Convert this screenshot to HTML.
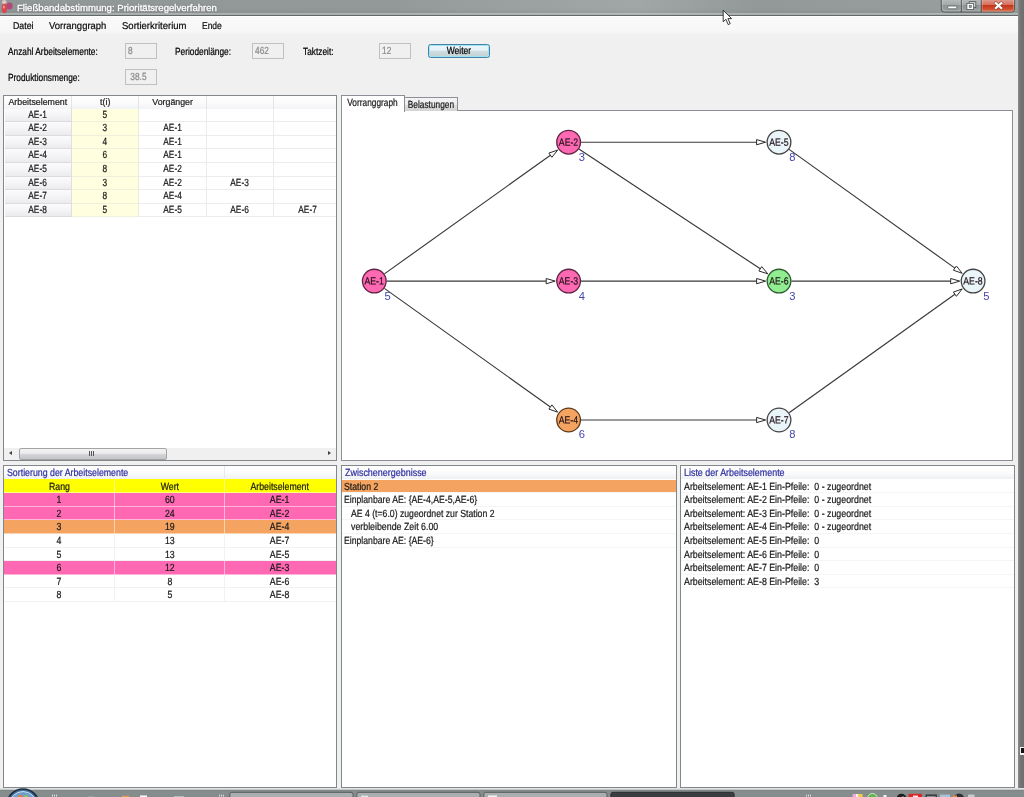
<!DOCTYPE html>
<html lang="de"><head><meta charset="utf-8"><title>Fließbandabstimmung: Prioritätsregelverfahren</title>
<style>
*{box-sizing:border-box;margin:0;padding:0}
html,body{width:1024px;height:797px;overflow:hidden;background:#f0f0f0}
body{position:relative;font-family:"Liberation Sans",sans-serif;font-size:8.8px;color:#1a1a1a}
.abs{position:absolute}
#titlebar{left:0;top:0;width:1024px;height:16px;background:linear-gradient(180deg,rgba(0,0,0,0) 0,rgba(0,0,0,0) 8px,rgba(0,0,0,.05) 13.3px,rgba(255,255,255,.42) 13.6px,rgba(255,255,255,.42) 14.4px,#636868 14.8px,#636868 15.7px,#fff 16px),linear-gradient(90deg,#919797 0%,#939999 38%,#989d9d 45%,#a1a6a6 62%,#939999 74%,#999e9e 100%)}
#title{left:17px;top:1.5px;color:#fff;font-size:9.6px;white-space:nowrap;text-shadow:0 0 2px rgba(60,60,60,.6);-webkit-text-stroke:0.3px #fff}
#menubar{left:0;top:16px;width:1018px;height:19px;background:linear-gradient(#fff 0,#fff .6px,#f9f9f9 1.2px,#f7f7f7 15px,#f0f0f0 19px)}
.menu{top:19.6px;font-size:9.9px;color:#0a0a0a;white-space:nowrap;transform-origin:0 50%;-webkit-text-stroke:0.2px #0a0a0a}
#rightedge{left:1017.6px;top:0;width:6.4px;height:790px;background:linear-gradient(90deg,#8c8c8c,#747474 40%,#6e6e6e)}
.t{display:inline-block;-webkit-text-stroke:0.22px currentColor;font-size:10.4px;transform:scaleX(0.8011) rotate(.03deg);transform-origin:0 50%;white-space:nowrap}
.c .t,.t.c{transform-origin:50% 50%}
.lbl{white-space:nowrap;color:#000}
.inp{background:#f0f0f0;border:1px solid #c0c0c0;color:#8a8a8a;height:16px;padding:1.3px 0 0 1.6px;line-height:11px}
.panel{background:#fff;border:1px solid #82878c;overflow:hidden}
.row{left:0;width:100%;height:13.6px}
.cell{position:absolute;top:0;height:13.6px;line-height:13.2px;text-align:center;white-space:nowrap;display:flex;justify-content:center}
.fc{display:flex;justify-content:center}
.lrow{position:absolute;left:0;width:100%;height:13.6px;line-height:13.2px;border-bottom:1px solid #f5f5f5;white-space:nowrap}
.hd{position:absolute;left:0;top:0;width:100%;height:12.9px;line-height:13.2px;color:#2e2ea0;-webkit-text-stroke:0.2px #2e2ea0;background:linear-gradient(#ffffff,#fcfcfd 50%,#eef0f3);white-space:nowrap}
#wrap{position:absolute;left:0;top:0;width:1024px;height:797px;will-change:transform}
</style></head><body><div id="wrap">
<div id="titlebar" class="abs"></div>
<div id="title" class="abs">Fließbandabstimmung: Prioritätsregelverfahren</div>
<div id="menubar" class="abs"></div>
<div class="abs menu" style="left:12.5px;transform:scaleX(.89) rotate(.03deg)">Datei</div>
<div class="abs menu" style="left:48.5px;transform:scaleX(.958) rotate(.03deg)">Vorranggraph</div>
<div class="abs menu" style="left:121.5px;transform:scaleX(.963) rotate(.03deg)">Sortierkriterium</div>
<div class="abs menu" style="left:202.2px;transform:scaleX(.857) rotate(.03deg)">Ende</div>
<div id="rightedge" class="abs"></div>

<div class="abs lbl" style="left:8px;top:45.5px"><span class="t">Anzahl Arbeitselemente:</span></div>
<div class="abs inp" style="left:125px;top:43px;width:32px"><span class="t">8</span></div>
<div class="abs lbl" style="left:175px;top:45.5px"><span class="t">Periodenlänge:</span></div>
<div class="abs inp" style="left:252px;top:43px;width:32px"><span class="t">462</span></div>
<div class="abs lbl" style="left:302.5px;top:45.5px"><span class="t">Taktzeit:</span></div>
<div class="abs inp" style="left:379px;top:43px;width:32px"><span class="t">12</span></div>
<div class="abs c fc" id="weiter" style="left:427.5px;top:43.5px;width:62px;height:14.8px;border:1.2px solid #4584a8;border-radius:2.5px;background:linear-gradient(#eef8fd 0%,#e2f0f6 45%,#cfdcdf 52%,#c4d2d4 100%);box-shadow:inset 0 0 0 1px #9fe2f2;text-align:center;line-height:11.6px;color:#000;-webkit-text-stroke:0.15px #000"><span class="t" style="transform:scaleX(0.8181) rotate(.03deg)">Weiter</span></div>
<div class="abs lbl" style="left:8px;top:71.5px"><span class="t">Produktionsmenge:</span></div>
<div class="abs inp" style="left:125px;top:69px;width:32px"><span class="t">&nbsp;38.5</span></div>
<div class="abs panel" id="lt" style="left:3px;top:95px;width:334px;height:366px">
<div class="abs row" style="top:0;height:12.6px;background:linear-gradient(#ffffff,#fbfbfc 50%,#f2f3f5)">
<div class="cell" style="left:0.6px;width:67.4px;height:12.6px;line-height:12px;border-right:1px solid #e3e4e6;-webkit-text-stroke:0.2px #1a1a1a">Arbeitselement</div>
<div class="cell" style="left:68.0px;width:67.4px;height:12.6px;line-height:12px;border-right:1px solid #e3e4e6;-webkit-text-stroke:0.2px #1a1a1a">t(i)</div>
<div class="cell" style="left:135.4px;width:67.4px;height:12.6px;line-height:12px;border-right:1px solid #e3e4e6;-webkit-text-stroke:0.2px #1a1a1a">Vorgänger</div>
<div class="cell" style="left:202.8px;width:67.4px;height:12.6px;line-height:12px;border-right:1px solid #e3e4e6;-webkit-text-stroke:0.2px #1a1a1a"></div>
<div class="cell" style="left:270.2px;width:67.4px;height:12.6px;line-height:12px;border-right:1px solid #e3e4e6;-webkit-text-stroke:0.2px #1a1a1a"></div>
</div>
<div class="abs row c" style="top:12.6px">
<div class="cell" style="left:0.6px;width:67.4px;line-height:12.6px;background:linear-gradient(#fbfbfc,#f4f4f6 55%,#ebebee);border-right:1px solid #e0e0e2;border-bottom:1px solid #dcdcde"><span class="t">AE-1</span></div>
<div class="cell" style="left:68.0px;width:67.4px;line-height:12.6px;background:#ffffe0;border-right:1px solid #eeeed6;border-bottom:1px solid #f0f0dc"><span class="t">5</span></div>
<div class="cell" style="left:135.4px;width:67.4px;line-height:12.6px;border-right:1px solid #ececec;border-bottom:1px solid #ececec"></div>
<div class="cell" style="left:202.8px;width:67.4px;line-height:12.6px;border-right:1px solid #ececec;border-bottom:1px solid #ececec"></div>
<div class="cell" style="left:270.2px;width:67.4px;line-height:12.6px;border-right:1px solid #ececec;border-bottom:1px solid #ececec"></div>
</div>
<div class="abs row c" style="top:26.2px">
<div class="cell" style="left:0.6px;width:67.4px;line-height:12.6px;background:linear-gradient(#fbfbfc,#f4f4f6 55%,#ebebee);border-right:1px solid #e0e0e2;border-bottom:1px solid #dcdcde"><span class="t">AE-2</span></div>
<div class="cell" style="left:68.0px;width:67.4px;line-height:12.6px;background:#ffffe0;border-right:1px solid #eeeed6;border-bottom:1px solid #f0f0dc"><span class="t">3</span></div>
<div class="cell" style="left:135.4px;width:67.4px;line-height:12.6px;border-right:1px solid #ececec;border-bottom:1px solid #ececec"><span class="t">AE-1</span></div>
<div class="cell" style="left:202.8px;width:67.4px;line-height:12.6px;border-right:1px solid #ececec;border-bottom:1px solid #ececec"></div>
<div class="cell" style="left:270.2px;width:67.4px;line-height:12.6px;border-right:1px solid #ececec;border-bottom:1px solid #ececec"></div>
</div>
<div class="abs row c" style="top:39.8px">
<div class="cell" style="left:0.6px;width:67.4px;line-height:12.6px;background:linear-gradient(#fbfbfc,#f4f4f6 55%,#ebebee);border-right:1px solid #e0e0e2;border-bottom:1px solid #dcdcde"><span class="t">AE-3</span></div>
<div class="cell" style="left:68.0px;width:67.4px;line-height:12.6px;background:#ffffe0;border-right:1px solid #eeeed6;border-bottom:1px solid #f0f0dc"><span class="t">4</span></div>
<div class="cell" style="left:135.4px;width:67.4px;line-height:12.6px;border-right:1px solid #ececec;border-bottom:1px solid #ececec"><span class="t">AE-1</span></div>
<div class="cell" style="left:202.8px;width:67.4px;line-height:12.6px;border-right:1px solid #ececec;border-bottom:1px solid #ececec"></div>
<div class="cell" style="left:270.2px;width:67.4px;line-height:12.6px;border-right:1px solid #ececec;border-bottom:1px solid #ececec"></div>
</div>
<div class="abs row c" style="top:53.4px">
<div class="cell" style="left:0.6px;width:67.4px;line-height:12.6px;background:linear-gradient(#fbfbfc,#f4f4f6 55%,#ebebee);border-right:1px solid #e0e0e2;border-bottom:1px solid #dcdcde"><span class="t">AE-4</span></div>
<div class="cell" style="left:68.0px;width:67.4px;line-height:12.6px;background:#ffffe0;border-right:1px solid #eeeed6;border-bottom:1px solid #f0f0dc"><span class="t">6</span></div>
<div class="cell" style="left:135.4px;width:67.4px;line-height:12.6px;border-right:1px solid #ececec;border-bottom:1px solid #ececec"><span class="t">AE-1</span></div>
<div class="cell" style="left:202.8px;width:67.4px;line-height:12.6px;border-right:1px solid #ececec;border-bottom:1px solid #ececec"></div>
<div class="cell" style="left:270.2px;width:67.4px;line-height:12.6px;border-right:1px solid #ececec;border-bottom:1px solid #ececec"></div>
</div>
<div class="abs row c" style="top:67.0px">
<div class="cell" style="left:0.6px;width:67.4px;line-height:12.6px;background:linear-gradient(#fbfbfc,#f4f4f6 55%,#ebebee);border-right:1px solid #e0e0e2;border-bottom:1px solid #dcdcde"><span class="t">AE-5</span></div>
<div class="cell" style="left:68.0px;width:67.4px;line-height:12.6px;background:#ffffe0;border-right:1px solid #eeeed6;border-bottom:1px solid #f0f0dc"><span class="t">8</span></div>
<div class="cell" style="left:135.4px;width:67.4px;line-height:12.6px;border-right:1px solid #ececec;border-bottom:1px solid #ececec"><span class="t">AE-2</span></div>
<div class="cell" style="left:202.8px;width:67.4px;line-height:12.6px;border-right:1px solid #ececec;border-bottom:1px solid #ececec"></div>
<div class="cell" style="left:270.2px;width:67.4px;line-height:12.6px;border-right:1px solid #ececec;border-bottom:1px solid #ececec"></div>
</div>
<div class="abs row c" style="top:80.6px">
<div class="cell" style="left:0.6px;width:67.4px;line-height:12.6px;background:linear-gradient(#fbfbfc,#f4f4f6 55%,#ebebee);border-right:1px solid #e0e0e2;border-bottom:1px solid #dcdcde"><span class="t">AE-6</span></div>
<div class="cell" style="left:68.0px;width:67.4px;line-height:12.6px;background:#ffffe0;border-right:1px solid #eeeed6;border-bottom:1px solid #f0f0dc"><span class="t">3</span></div>
<div class="cell" style="left:135.4px;width:67.4px;line-height:12.6px;border-right:1px solid #ececec;border-bottom:1px solid #ececec"><span class="t">AE-2</span></div>
<div class="cell" style="left:202.8px;width:67.4px;line-height:12.6px;border-right:1px solid #ececec;border-bottom:1px solid #ececec"><span class="t">AE-3</span></div>
<div class="cell" style="left:270.2px;width:67.4px;line-height:12.6px;border-right:1px solid #ececec;border-bottom:1px solid #ececec"></div>
</div>
<div class="abs row c" style="top:94.2px">
<div class="cell" style="left:0.6px;width:67.4px;line-height:12.6px;background:linear-gradient(#fbfbfc,#f4f4f6 55%,#ebebee);border-right:1px solid #e0e0e2;border-bottom:1px solid #dcdcde"><span class="t">AE-7</span></div>
<div class="cell" style="left:68.0px;width:67.4px;line-height:12.6px;background:#ffffe0;border-right:1px solid #eeeed6;border-bottom:1px solid #f0f0dc"><span class="t">8</span></div>
<div class="cell" style="left:135.4px;width:67.4px;line-height:12.6px;border-right:1px solid #ececec;border-bottom:1px solid #ececec"><span class="t">AE-4</span></div>
<div class="cell" style="left:202.8px;width:67.4px;line-height:12.6px;border-right:1px solid #ececec;border-bottom:1px solid #ececec"></div>
<div class="cell" style="left:270.2px;width:67.4px;line-height:12.6px;border-right:1px solid #ececec;border-bottom:1px solid #ececec"></div>
</div>
<div class="abs row c" style="top:107.8px">
<div class="cell" style="left:0.6px;width:67.4px;line-height:12.6px;background:linear-gradient(#fbfbfc,#f4f4f6 55%,#ebebee);border-right:1px solid #e0e0e2;border-bottom:1px solid #dcdcde"><span class="t">AE-8</span></div>
<div class="cell" style="left:68.0px;width:67.4px;line-height:12.6px;background:#ffffe0;border-right:1px solid #eeeed6;border-bottom:1px solid #f0f0dc"><span class="t">5</span></div>
<div class="cell" style="left:135.4px;width:67.4px;line-height:12.6px;border-right:1px solid #ececec;border-bottom:1px solid #ececec"><span class="t">AE-5</span></div>
<div class="cell" style="left:202.8px;width:67.4px;line-height:12.6px;border-right:1px solid #ececec;border-bottom:1px solid #ececec"><span class="t">AE-6</span></div>
<div class="cell" style="left:270.2px;width:67.4px;line-height:12.6px;border-right:1px solid #ececec;border-bottom:1px solid #ececec"><span class="t">AE-7</span></div>
</div>
<div class="abs" style="left:0;top:351.5px;width:332px;height:13px;background:#f0f0f0">
<div class="abs" style="left:14.5px;top:0.5px;width:148.5px;height:12px;border:1px solid #a4a4a4;border-radius:2px;background:linear-gradient(#f4f4f4,#e9e9eb 45%,#d6d6d9 50%,#c4c5c9)"></div>
<div class="abs" style="left:5px;top:3.6px;width:0;height:0;border-top:2.6px solid transparent;border-bottom:2.6px solid transparent;border-right:3.2px solid #404040"></div>
<div class="abs" style="left:324px;top:3.4px;width:0;height:0;border-top:2.8px solid transparent;border-bottom:2.8px solid transparent;border-left:3.4px solid #404040"></div>
<div class="abs" style="left:85px;top:3.5px;width:1px;height:5px;background:#555;box-shadow:2px 0 0 #555,4px 0 0 #555"></div>
</div>
</div>
<div class="abs panel" id="bl" style="left:3px;top:465px;width:334px;height:323px">
<div class="hd" style="padding-left:2.5px"><span class="t" style="transform:scaleX(0.8464) rotate(.03deg)">Sortierung der Arbeitselemente</span>
<i class="abs" style="left:219.8px;top:0;width:1px;height:13.6px;background:#e6e8ec"></i>
</div>
<div class="lrow c" style="top:12.9px;height:14.3px;padding-top:.7px;background:#ffff00;border-bottom:1px solid rgba(255,255,255,.5)">
<div class="cell" style="left:0.5px;width:110.4px;height:14.3px;padding-top:.7px;border-right:1px solid rgba(255,255,255,.5)"><span class="t" style="transform:scaleX(0.8435) rotate(.03deg)">Rang</span></div>
<div class="cell" style="left:110.9px;width:110.4px;height:14.3px;padding-top:.7px;border-right:1px solid rgba(255,255,255,.5)"><span class="t" style="transform:scaleX(0.8435) rotate(.03deg)">Wert</span></div>
<div class="cell" style="left:221.3px;width:110.4px;height:14.3px;padding-top:.7px;border-right:1px solid transparent"><span class="t" style="transform:scaleX(0.8435) rotate(.03deg)">Arbeitselement</span></div>
</div>
<div class="lrow c" style="top:27.2px;background:#ff69b4;border-bottom:1px solid rgba(255,255,255,.5)">
<div class="cell" style="left:0.5px;width:110.4px;border-right:1px solid rgba(255,255,255,.5)"><span class="t" style="transform:scaleX(0.8435) rotate(.03deg)">1</span></div>
<div class="cell" style="left:110.9px;width:110.4px;border-right:1px solid rgba(255,255,255,.5)"><span class="t" style="transform:scaleX(0.8435) rotate(.03deg)">60</span></div>
<div class="cell" style="left:221.3px;width:110.4px;border-right:1px solid transparent"><span class="t" style="transform:scaleX(0.8435) rotate(.03deg)">AE-1</span></div>
</div>
<div class="lrow c" style="top:40.8px;background:#ff69b4;border-bottom:1px solid rgba(255,255,255,.5)">
<div class="cell" style="left:0.5px;width:110.4px;border-right:1px solid rgba(255,255,255,.5)"><span class="t" style="transform:scaleX(0.8435) rotate(.03deg)">2</span></div>
<div class="cell" style="left:110.9px;width:110.4px;border-right:1px solid rgba(255,255,255,.5)"><span class="t" style="transform:scaleX(0.8435) rotate(.03deg)">24</span></div>
<div class="cell" style="left:221.3px;width:110.4px;border-right:1px solid transparent"><span class="t" style="transform:scaleX(0.8435) rotate(.03deg)">AE-2</span></div>
</div>
<div class="lrow c" style="top:54.4px;background:#f4a460;border-bottom:1px solid rgba(255,255,255,.5)">
<div class="cell" style="left:0.5px;width:110.4px;border-right:1px solid rgba(255,255,255,.5)"><span class="t" style="transform:scaleX(0.8435) rotate(.03deg)">3</span></div>
<div class="cell" style="left:110.9px;width:110.4px;border-right:1px solid rgba(255,255,255,.5)"><span class="t" style="transform:scaleX(0.8435) rotate(.03deg)">19</span></div>
<div class="cell" style="left:221.3px;width:110.4px;border-right:1px solid transparent"><span class="t" style="transform:scaleX(0.8435) rotate(.03deg)">AE-4</span></div>
</div>
<div class="lrow c" style="top:68.0px;background:#fff;border-bottom:1px solid #f2f2f2">
<div class="cell" style="left:0.5px;width:110.4px;border-right:1px solid #f2f2f2"><span class="t" style="transform:scaleX(0.8435) rotate(.03deg)">4</span></div>
<div class="cell" style="left:110.9px;width:110.4px;border-right:1px solid #f2f2f2"><span class="t" style="transform:scaleX(0.8435) rotate(.03deg)">13</span></div>
<div class="cell" style="left:221.3px;width:110.4px;border-right:1px solid transparent"><span class="t" style="transform:scaleX(0.8435) rotate(.03deg)">AE-7</span></div>
</div>
<div class="lrow c" style="top:81.6px;background:#fff;border-bottom:1px solid #f2f2f2">
<div class="cell" style="left:0.5px;width:110.4px;border-right:1px solid #f2f2f2"><span class="t" style="transform:scaleX(0.8435) rotate(.03deg)">5</span></div>
<div class="cell" style="left:110.9px;width:110.4px;border-right:1px solid #f2f2f2"><span class="t" style="transform:scaleX(0.8435) rotate(.03deg)">13</span></div>
<div class="cell" style="left:221.3px;width:110.4px;border-right:1px solid transparent"><span class="t" style="transform:scaleX(0.8435) rotate(.03deg)">AE-5</span></div>
</div>
<div class="lrow c" style="top:95.2px;background:#ff69b4;border-bottom:1px solid rgba(255,255,255,.5)">
<div class="cell" style="left:0.5px;width:110.4px;border-right:1px solid rgba(255,255,255,.5)"><span class="t" style="transform:scaleX(0.8435) rotate(.03deg)">6</span></div>
<div class="cell" style="left:110.9px;width:110.4px;border-right:1px solid rgba(255,255,255,.5)"><span class="t" style="transform:scaleX(0.8435) rotate(.03deg)">12</span></div>
<div class="cell" style="left:221.3px;width:110.4px;border-right:1px solid transparent"><span class="t" style="transform:scaleX(0.8435) rotate(.03deg)">AE-3</span></div>
</div>
<div class="lrow c" style="top:108.8px;background:#fff;border-bottom:1px solid #f2f2f2">
<div class="cell" style="left:0.5px;width:110.4px;border-right:1px solid #f2f2f2"><span class="t" style="transform:scaleX(0.8435) rotate(.03deg)">7</span></div>
<div class="cell" style="left:110.9px;width:110.4px;border-right:1px solid #f2f2f2"><span class="t" style="transform:scaleX(0.8435) rotate(.03deg)">8</span></div>
<div class="cell" style="left:221.3px;width:110.4px;border-right:1px solid transparent"><span class="t" style="transform:scaleX(0.8435) rotate(.03deg)">AE-6</span></div>
</div>
<div class="lrow c" style="top:122.4px;background:#fff;border-bottom:1px solid #f2f2f2">
<div class="cell" style="left:0.5px;width:110.4px;border-right:1px solid #f2f2f2"><span class="t" style="transform:scaleX(0.8435) rotate(.03deg)">8</span></div>
<div class="cell" style="left:110.9px;width:110.4px;border-right:1px solid #f2f2f2"><span class="t" style="transform:scaleX(0.8435) rotate(.03deg)">5</span></div>
<div class="cell" style="left:221.3px;width:110.4px;border-right:1px solid transparent"><span class="t" style="transform:scaleX(0.8435) rotate(.03deg)">AE-8</span></div>
</div>
</div>
<div class="abs panel" id="bm" style="left:341px;top:465px;width:336px;height:323px">
<div class="hd" style="padding-left:2.5px"><span class="t" style="transform:scaleX(0.8615) rotate(.03deg)">Zwischenergebnisse</span></div>
<div class="lrow" style="top:13.6px;background:linear-gradient(#fff 0,#fff 0.4px,#f4a460 0.4px,#f4a460 12.1px,#fff 12.1px);padding-left:2px"><span class="t" style="transform:scaleX(0.8351) rotate(.03deg)">Station 2</span></div>
<div class="lrow" style="top:27.2px;background:#fff;padding-left:2px"><span class="t" style="transform:scaleX(0.8351) rotate(.03deg)">Einplanbare AE: {AE-4,AE-5,AE-6}</span></div>
<div class="lrow" style="top:40.8px;background:#fff;padding-left:9px"><span class="t" style="transform:scaleX(0.8351) rotate(.03deg)">AE 4 (t=6.0) zugeordnet zur Station 2</span></div>
<div class="lrow" style="top:54.4px;background:#fff;padding-left:9px"><span class="t" style="transform:scaleX(0.8483) rotate(.03deg)">verbleibende Zeit 6.00</span></div>
<div class="lrow" style="top:68.0px;background:#fff;padding-left:2px"><span class="t" style="transform:scaleX(0.8351) rotate(.03deg)">Einplanbare AE: {AE-6}</span></div>
</div>
<div class="abs panel" id="br" style="left:680px;top:465px;width:335px;height:323px">
<div class="hd" style="padding-left:2.5px"><span class="t" style="transform:scaleX(0.8577) rotate(.03deg)">Liste der Arbeitselemente</span></div>
<div class="lrow" style="top:13.6px;padding-left:2.5px"><span class="t" style="transform:scaleX(0.8483) rotate(.03deg)">Arbeitselement: AE-1 Ein-Pfeile:&nbsp; 0 - zugeordnet</span></div>
<div class="lrow" style="top:27.2px;padding-left:2.5px"><span class="t" style="transform:scaleX(0.8483) rotate(.03deg)">Arbeitselement: AE-2 Ein-Pfeile:&nbsp; 0 - zugeordnet</span></div>
<div class="lrow" style="top:40.8px;padding-left:2.5px"><span class="t" style="transform:scaleX(0.8483) rotate(.03deg)">Arbeitselement: AE-3 Ein-Pfeile:&nbsp; 0 - zugeordnet</span></div>
<div class="lrow" style="top:54.4px;padding-left:2.5px"><span class="t" style="transform:scaleX(0.8483) rotate(.03deg)">Arbeitselement: AE-4 Ein-Pfeile:&nbsp; 0 - zugeordnet</span></div>
<div class="lrow" style="top:68.0px;padding-left:2.5px"><span class="t" style="transform:scaleX(0.8483) rotate(.03deg)">Arbeitselement: AE-5 Ein-Pfeile:&nbsp; 0</span></div>
<div class="lrow" style="top:81.6px;padding-left:2.5px"><span class="t" style="transform:scaleX(0.8483) rotate(.03deg)">Arbeitselement: AE-6 Ein-Pfeile:&nbsp; 0</span></div>
<div class="lrow" style="top:95.2px;padding-left:2.5px"><span class="t" style="transform:scaleX(0.8483) rotate(.03deg)">Arbeitselement: AE-7 Ein-Pfeile:&nbsp; 0</span></div>
<div class="lrow" style="top:108.8px;padding-left:2.5px"><span class="t" style="transform:scaleX(0.8483) rotate(.03deg)">Arbeitselement: AE-8 Ein-Pfeile:&nbsp; 3</span></div>
</div>
<div class="abs" style="left:341px;top:110px;width:672px;height:351px;background:#fff;border:1px solid #8c9096"></div>
<div class="abs c fc" style="left:404px;top:96.5px;width:54px;height:14px;border:1px solid #8c9096;border-bottom:none;background:linear-gradient(#f4f4f4,#ececec 50%,#dedede 51%,#d4d4d4);text-align:center;line-height:13.4px;padding-left:.5px"><span class="t">Belastungen</span></div>
<div class="abs c fc" style="left:341px;top:94.5px;width:64px;height:17px;border:1px solid #8c9096;border-bottom:none;background:#fff;text-align:center;line-height:14.8px;padding-right:.4px"><span class="t">Vorranggraph</span></div>
<svg class="abs" style="left:0;top:0" width="1024" height="797" viewBox="0 0 1024 797" font-family="Liberation Sans, sans-serif">
<line x1="384.4" y1="273.9" x2="550.4" y2="155.2" stroke="#383838" stroke-width="1.15"/>
<polygon points="557.7,150.0 551.9,157.3 548.9,153.1" fill="#fff" stroke="#2a2a2a" stroke-width="1"/>
<line x1="386.7" y1="281.1" x2="546.2" y2="281.1" stroke="#383838" stroke-width="1.15"/>
<polygon points="555.2,281.1 546.2,283.8 546.2,278.5" fill="#fff" stroke="#2a2a2a" stroke-width="1"/>
<line x1="384.4" y1="288.4" x2="550.4" y2="407.0" stroke="#383838" stroke-width="1.15"/>
<polygon points="557.7,412.2 548.9,409.1 551.9,404.9" fill="#fff" stroke="#2a2a2a" stroke-width="1"/>
<line x1="581.0" y1="142.2" x2="756.6" y2="142.2" stroke="#383838" stroke-width="1.15"/>
<polygon points="765.6,142.2 756.6,144.8 756.6,139.6" fill="#fff" stroke="#2a2a2a" stroke-width="1"/>
<line x1="578.9" y1="149.0" x2="760.3" y2="268.8" stroke="#383838" stroke-width="1.15"/>
<polygon points="767.8,273.8 758.9,271.0 761.7,266.6" fill="#fff" stroke="#2a2a2a" stroke-width="1"/>
<line x1="581.0" y1="281.1" x2="756.6" y2="281.1" stroke="#383838" stroke-width="1.15"/>
<polygon points="765.6,281.1 756.6,283.8 756.6,278.5" fill="#fff" stroke="#2a2a2a" stroke-width="1"/>
<line x1="581.0" y1="420.0" x2="756.6" y2="420.0" stroke="#383838" stroke-width="1.15"/>
<polygon points="765.6,420.0 756.6,422.6 756.6,417.4" fill="#fff" stroke="#2a2a2a" stroke-width="1"/>
<line x1="789.1" y1="149.4" x2="954.9" y2="268.1" stroke="#383838" stroke-width="1.15"/>
<polygon points="962.2,273.3 953.4,270.2 956.4,266.0" fill="#fff" stroke="#2a2a2a" stroke-width="1"/>
<line x1="791.4" y1="281.1" x2="950.7" y2="281.1" stroke="#383838" stroke-width="1.15"/>
<polygon points="959.7,281.1 950.7,283.8 950.7,278.5" fill="#fff" stroke="#2a2a2a" stroke-width="1"/>
<line x1="789.1" y1="412.8" x2="954.9" y2="294.2" stroke="#383838" stroke-width="1.15"/>
<polygon points="962.2,288.9 956.4,296.3 953.4,292.1" fill="#fff" stroke="#2a2a2a" stroke-width="1"/>
<circle cx="374.3" cy="281.1" r="11.85" fill="#ff69b4" stroke="#5e2542" stroke-width="1.3"/>
<text x="374.3" y="284.6" font-size="10.5" text-anchor="middle" fill="#201018" stroke="#201018" stroke-width="0.2" transform="translate(374.3 0) scale(0.83 1) rotate(0.03) translate(-374.3 0)">AE-1</text>
<text x="387.6" y="299.5" font-size="11.2" text-anchor="middle" fill="#4545ad" transform="translate(387.6 0) scale(1 1) translate(-387.6 0)">5</text>
<circle cx="568.6" cy="142.2" r="11.85" fill="#ff69b4" stroke="#5e2542" stroke-width="1.3"/>
<text x="568.6" y="145.7" font-size="10.5" text-anchor="middle" fill="#201018" stroke="#201018" stroke-width="0.2" transform="translate(568.6 0) scale(0.83 1) rotate(0.03) translate(-568.6 0)">AE-2</text>
<text x="581.9" y="160.6" font-size="11.2" text-anchor="middle" fill="#4545ad" transform="translate(581.9 0) scale(1 1) translate(-581.9 0)">3</text>
<circle cx="568.6" cy="281.1" r="11.85" fill="#ff69b4" stroke="#5e2542" stroke-width="1.3"/>
<text x="568.6" y="284.6" font-size="10.5" text-anchor="middle" fill="#201018" stroke="#201018" stroke-width="0.2" transform="translate(568.6 0) scale(0.83 1) rotate(0.03) translate(-568.6 0)">AE-3</text>
<text x="581.9" y="299.5" font-size="11.2" text-anchor="middle" fill="#4545ad" transform="translate(581.9 0) scale(1 1) translate(-581.9 0)">4</text>
<circle cx="568.6" cy="420.0" r="11.85" fill="#f4a460" stroke="#5e3a1c" stroke-width="1.3"/>
<text x="568.6" y="423.5" font-size="10.5" text-anchor="middle" fill="#201018" stroke="#201018" stroke-width="0.2" transform="translate(568.6 0) scale(0.83 1) rotate(0.03) translate(-568.6 0)">AE-4</text>
<text x="581.9" y="438.4" font-size="11.2" text-anchor="middle" fill="#4545ad" transform="translate(581.9 0) scale(1 1) translate(-581.9 0)">6</text>
<circle cx="779.0" cy="142.2" r="11.85" fill="#eaf5f9" stroke="#444" stroke-width="1.3"/>
<text x="779.0" y="145.7" font-size="10.5" text-anchor="middle" fill="#201018" stroke="#201018" stroke-width="0.2" transform="translate(779.0 0) scale(0.83 1) rotate(0.03) translate(-779.0 0)">AE-5</text>
<text x="792.3" y="160.6" font-size="11.2" text-anchor="middle" fill="#4545ad" transform="translate(792.3 0) scale(1 1) translate(-792.3 0)">8</text>
<circle cx="779.0" cy="281.1" r="11.85" fill="#90ee90" stroke="#2f5a2f" stroke-width="1.3"/>
<text x="779.0" y="284.6" font-size="10.5" text-anchor="middle" fill="#201018" stroke="#201018" stroke-width="0.2" transform="translate(779.0 0) scale(0.83 1) rotate(0.03) translate(-779.0 0)">AE-6</text>
<text x="792.3" y="299.5" font-size="11.2" text-anchor="middle" fill="#4545ad" transform="translate(792.3 0) scale(1 1) translate(-792.3 0)">3</text>
<circle cx="779.0" cy="420.0" r="11.85" fill="#eaf5f9" stroke="#444" stroke-width="1.3"/>
<text x="779.0" y="423.5" font-size="10.5" text-anchor="middle" fill="#201018" stroke="#201018" stroke-width="0.2" transform="translate(779.0 0) scale(0.83 1) rotate(0.03) translate(-779.0 0)">AE-7</text>
<text x="792.3" y="438.4" font-size="11.2" text-anchor="middle" fill="#4545ad" transform="translate(792.3 0) scale(1 1) translate(-792.3 0)">8</text>
<circle cx="973.1" cy="281.1" r="11.85" fill="#eaf5f9" stroke="#444" stroke-width="1.3"/>
<text x="973.1" y="284.6" font-size="10.5" text-anchor="middle" fill="#201018" stroke="#201018" stroke-width="0.2" transform="translate(973.1 0) scale(0.83 1) rotate(0.03) translate(-973.1 0)">AE-8</text>
<text x="986.4" y="299.5" font-size="11.2" text-anchor="middle" fill="#4545ad" transform="translate(986.4 0) scale(1 1) translate(-986.4 0)">5</text>
</svg>
<svg class="abs" style="left:0;top:0" width="1024" height="30" viewBox="0 0 1024 30">
<defs><linearGradient id="gb" x1="0" y1="0" x2="0" y2="1"><stop offset="0" stop-color="#b9bdbd"/><stop offset=".45" stop-color="#a3a8a8"/><stop offset=".5" stop-color="#8e9393"/><stop offset="1" stop-color="#9a9f9f"/></linearGradient>
<linearGradient id="gr" x1="0" y1="0" x2="0" y2="1"><stop offset="0" stop-color="#e2a093"/><stop offset=".45" stop-color="#d6705c"/><stop offset=".5" stop-color="#c4351c"/><stop offset="1" stop-color="#d9633f"/></linearGradient></defs>
<ellipse cx="9.5" cy="6" rx="3.2" ry="3.6" fill="#b04a78"/>
<ellipse cx="4.4" cy="8.4" rx="2.7" ry="4.8" fill="#d8484c"/>
<ellipse cx="4.2" cy="2" rx="2.3" ry="2" fill="#e4c4c8"/>
<ellipse cx="3.9" cy="7" rx="0.8" ry="1.6" fill="#f0b0b0"/>
<path d="M941.3,-1 V9 Q941.3,12 944.3,12 H1011.6 Q1014.6,12 1014.6,9 V-1 Z" fill="url(#gb)" stroke="#4e5252" stroke-width="1"/>
<path d="M981.2,-1 H1014.1 V9 Q1014.1,11.5 1011.6,11.5 H981.2 Z" fill="url(#gr)"/>
<path d="M942.3,0 V9 Q942.3,11 944.3,11 H960.3 V0 M962.3,0 V11 H980.2 V0 M982.2,0 V11 H1011.6 Q1013.6,11 1013.6,9 V0" fill="none" stroke="rgba(255,255,255,.35)" stroke-width="0.8"/>
<path d="M961.3,0 V12 M981.2,0 V12" stroke="#4e5252" stroke-width="1" fill="none"/>
<rect x="947.8" y="6" width="9" height="2.8" rx="0.6" fill="#fff" stroke="#5a5e5e" stroke-width="0.8"/>
<rect x="969.2" y="1.6" width="6.6" height="6" fill="#c8cccc" stroke="#555959" stroke-width="0.8"/>
<rect x="966.9" y="3.4" width="6.6" height="6.2" fill="#fff" stroke="#555959" stroke-width="0.8"/>
<rect x="969.2" y="5.6" width="2.2" height="1.8" fill="#9ca0a0" stroke="#555959" stroke-width="0.6"/>
<path d="M995.9,3.2 L1001.2,8 M1001.2,3.2 L995.9,8" stroke="#5a2a20" stroke-width="3.3" stroke-linecap="square" opacity=".5"/>
<path d="M995.9,3.2 L1001.2,8 M1001.2,3.2 L995.9,8" stroke="#fff" stroke-width="2.2" stroke-linecap="square"/>
<path d="M723.2,10.3 L723.2,21.8 L725.9,19.3 L728.2,24.6 L730.2,23.7 L727.9,18.6 L731.6,18.6 Z" fill="#fff" stroke="#222" stroke-width="0.9" stroke-linejoin="round"/>
</svg>
<div class="abs" style="left:1020.3px;top:746.5px;width:4px;height:8px;background:#f4f4f4"></div><div class="abs" style="left:1021.4px;top:747.8px;width:3px;height:5.4px;background:#111"></div>
<div class="abs" style="left:0;top:788px;width:1024px;height:9px;background:linear-gradient(#f0f0f0 0,#c4c6c6 1.6px,#7a8080 2.6px,#868d8d 3.6px,#858c8c 100%)"></div>
<svg class="abs" style="left:0;top:787px" width="1024" height="10" viewBox="0 787 1024 10">
<circle cx="23" cy="805" r="16" fill="#3f6f9f" stroke="#1c2c3c" stroke-width="1.6"/>
<circle cx="23" cy="805" r="13.5" fill="#6f9fc4" stroke="#cfe0ee" stroke-width="1"/>
<ellipse cx="20.5" cy="797.5" rx="2.6" ry="2.6" fill="#e8783c"/>
<ellipse cx="26" cy="797.8" rx="2.4" ry="2.2" fill="#8cc864"/>
<rect x="52" y="794.6" width="1" height="2" fill="#d8dcdc"/><rect x="54" y="794.6" width="1" height="2" fill="#d8dcdc"/><rect x="56" y="794.6" width="1" height="2" fill="#d8dcdc"/>
<rect x="219" y="794.6" width="1" height="2" fill="#d8dcdc"/><rect x="221" y="794.6" width="1" height="2" fill="#d8dcdc"/><rect x="223" y="794.6" width="1" height="2" fill="#d8dcdc"/>
<rect x="806" y="794.6" width="1" height="2" fill="#d8dcdc"/><rect x="808" y="794.6" width="1" height="2" fill="#d8dcdc"/><rect x="810" y="794.6" width="1" height="2" fill="#d8dcdc"/>
<rect x="88" y="796.2" width="6" height="3" fill="#9aa2a6"/><rect x="122" y="795.8" width="7" height="3" fill="#e0a050"/><rect x="140" y="795.4" width="7" height="3" fill="#f4f6f8"/><rect x="174" y="796" width="10" height="3" fill="#b4bcc8"/>
<rect x="229.8" y="792.3" width="123.2" height="8" rx="2" fill="#a9afaf" stroke="#565c5c" stroke-width="1"/>
<rect x="356.8" y="792.3" width="123.2" height="8" rx="2" fill="#a9afaf" stroke="#565c5c" stroke-width="1"/>
<rect x="483.8" y="792.3" width="123.2" height="8" rx="2" fill="#a9afaf" stroke="#565c5c" stroke-width="1"/>
<rect x="610.9" y="792.3" width="123.2" height="8" rx="2" fill="#3a3e3e" stroke="#2a2e2e" stroke-width="1"/>
<rect x="361" y="795.6" width="7" height="3" fill="#dfe6f0"/><rect x="488" y="795.4" width="9" height="3" fill="#f0f0f0"/>
<rect x="852.5" y="794" width="3.5" height="4" fill="#f0a8d8"/><rect x="856" y="794" width="2" height="4" fill="#f4f4f4"/><rect x="858" y="794" width="4.5" height="4" fill="#f0d048"/>
<circle cx="872.5" cy="798.3" r="4.8" fill="#58b848" stroke="#e8f4e8" stroke-width="0.8"/>
<rect x="883.5" y="795" width="3" height="3" fill="#f4f4f4"/>
<circle cx="901.5" cy="798.8" r="5" fill="#1c1c1c"/><circle cx="903" cy="798.5" r="2" fill="#e8e8e8"/>
<rect x="908.5" y="793.8" width="13.5" height="5" fill="#d82828"/><rect x="913" y="795.6" width="5" height="3" fill="#f8f0f0"/>
<rect x="925.5" y="794.4" width="11.5" height="4" fill="#3c4044"/><rect x="927" y="796" width="8.5" height="2" fill="#8a9096"/>
<rect x="940" y="794.6" width="10" height="4" fill="#a8c4dc"/>
<circle cx="959" cy="798.8" r="5.2" fill="#2c3038"/><rect x="953" y="795.5" width="4" height="2.5" fill="#e89040"/>
<rect x="968" y="794.6" width="6.5" height="4" fill="#c8cccc"/>
</svg>
</div></body></html>
